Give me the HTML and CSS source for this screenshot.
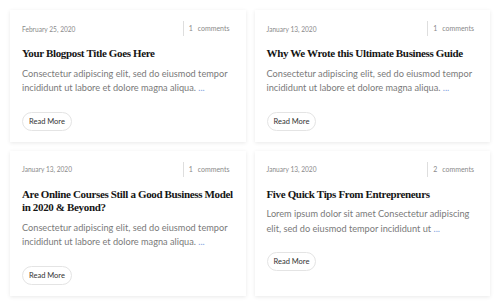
FILE: index.html
```html
<!DOCTYPE html>
<html lang="en">
<head>
    <meta charset="UTF-8">
    <meta name="viewport" content="width=device-width, initial-scale=1.0">
    <title>Blog Posts</title>
    <link rel="stylesheet" href="styles.css">
</head>
<body>
    <div class="posts">
        <div class="post">
            <div class="meta">
                <span class="date">February 25, 2020</span>
                <span class="comments"><b>1</b> comments</span>
            </div>
            <h2 class="title">Your Blogpost Title Goes Here</h2>
            <p class="excerpt">Consectetur adipiscing elit, sed do eiusmod tempor incididunt ut labore et dolore magna aliqua. <a href="#">...</a></p>
            <a class="more" href="#">Read More</a>
        </div>
        <div class="post">
            <div class="meta">
                <span class="date">January 13, 2020</span>
                <span class="comments"><b>1</b> comments</span>
            </div>
            <h2 class="title">Why We Wrote this Ultimate Business Guide</h2>
            <p class="excerpt">Consectetur adipiscing elit, sed do eiusmod tempor incididunt ut labore et dolore magna aliqua. <a href="#">...</a></p>
            <a class="more" href="#">Read More</a>
        </div>
        <div class="post">
            <div class="meta">
                <span class="date">January 13, 2020</span>
                <span class="comments"><b>1</b> comments</span>
            </div>
            <h2 class="title">Are Online Courses Still a Good Business Model in 2020 &amp; Beyond?</h2>
            <p class="excerpt">Consectetur adipiscing elit, sed do eiusmod tempor incididunt ut labore et dolore magna aliqua. <a href="#">...</a></p>
            <a class="more" href="#">Read More</a>
        </div>
        <div class="post">
            <div class="meta">
                <span class="date">January 13, 2020</span>
                <span class="comments"><b>2</b> comments</span>
            </div>
            <h2 class="title">Five Quick Tips From Entrepreneurs</h2>
            <p class="excerpt">Lorem ipsum dolor sit amet Consectetur adipiscing elit, sed do eiusmod tempor incididunt ut <a href="#">...</a></p>
            <a class="more" href="#">Read More</a>
        </div>
    </div>
</body>
</html>
```

FILE: styles.css
```css
body{
    margin: 0;
    background-color: #ffffff;
    font-family: Lato, "Open Sans", sans-serif;
}
.posts{
    display: grid;
    grid-template-columns: 1fr 1fr;
    gap: 9px;
    padding: 10px;
}
.post{
    display: flex;
    flex-direction: column;
    align-items: flex-start;
    background-color: white;
    box-shadow: 0 1px 4px rgba(0, 0, 0, 0.09);
    padding: 11px 12px 11px 12px;
}
.meta{
    display: flex;
    justify-content: space-between;
    align-items: center;
    align-self: stretch;
    height: 15px;
    padding-right: 4px;
}
.date{
    font-size: 6.6px;
    color: #8a8a8a;
}
.comments{
    border-left: 1px solid #dedede;
    padding-left: 5px;
    height: 15px;
    line-height: 15px;
    white-space: nowrap;
    font-size: 7px;
    color: #8a8a8a;
}
.comments b{
    font-weight: normal;
    margin-right: 3px;
}
.title{
    margin: 11px 0 6px;
    font-family: "Liberation Serif", serif;
    font-size: 11px;
    letter-spacing: -0.35px;
    line-height: 13.5px;
    color: #151515;
}
.excerpt{
    margin: 0;
    padding-right: 4px;
    font-size: 9.2px;
    line-height: 14.5px;
    color: #7a7a7a;
}
.excerpt a{
    color: #7c9ee0;
    text-decoration: none;
}
.more{
    margin-top: 16px;
    border: 1px solid #e4e4e4;
    border-radius: 10px;
    padding: 0 6px;
    height: 17px;
    line-height: 17px;
    font-size: 7.5px;
    color: #333333;
    text-decoration: none;
}
```
